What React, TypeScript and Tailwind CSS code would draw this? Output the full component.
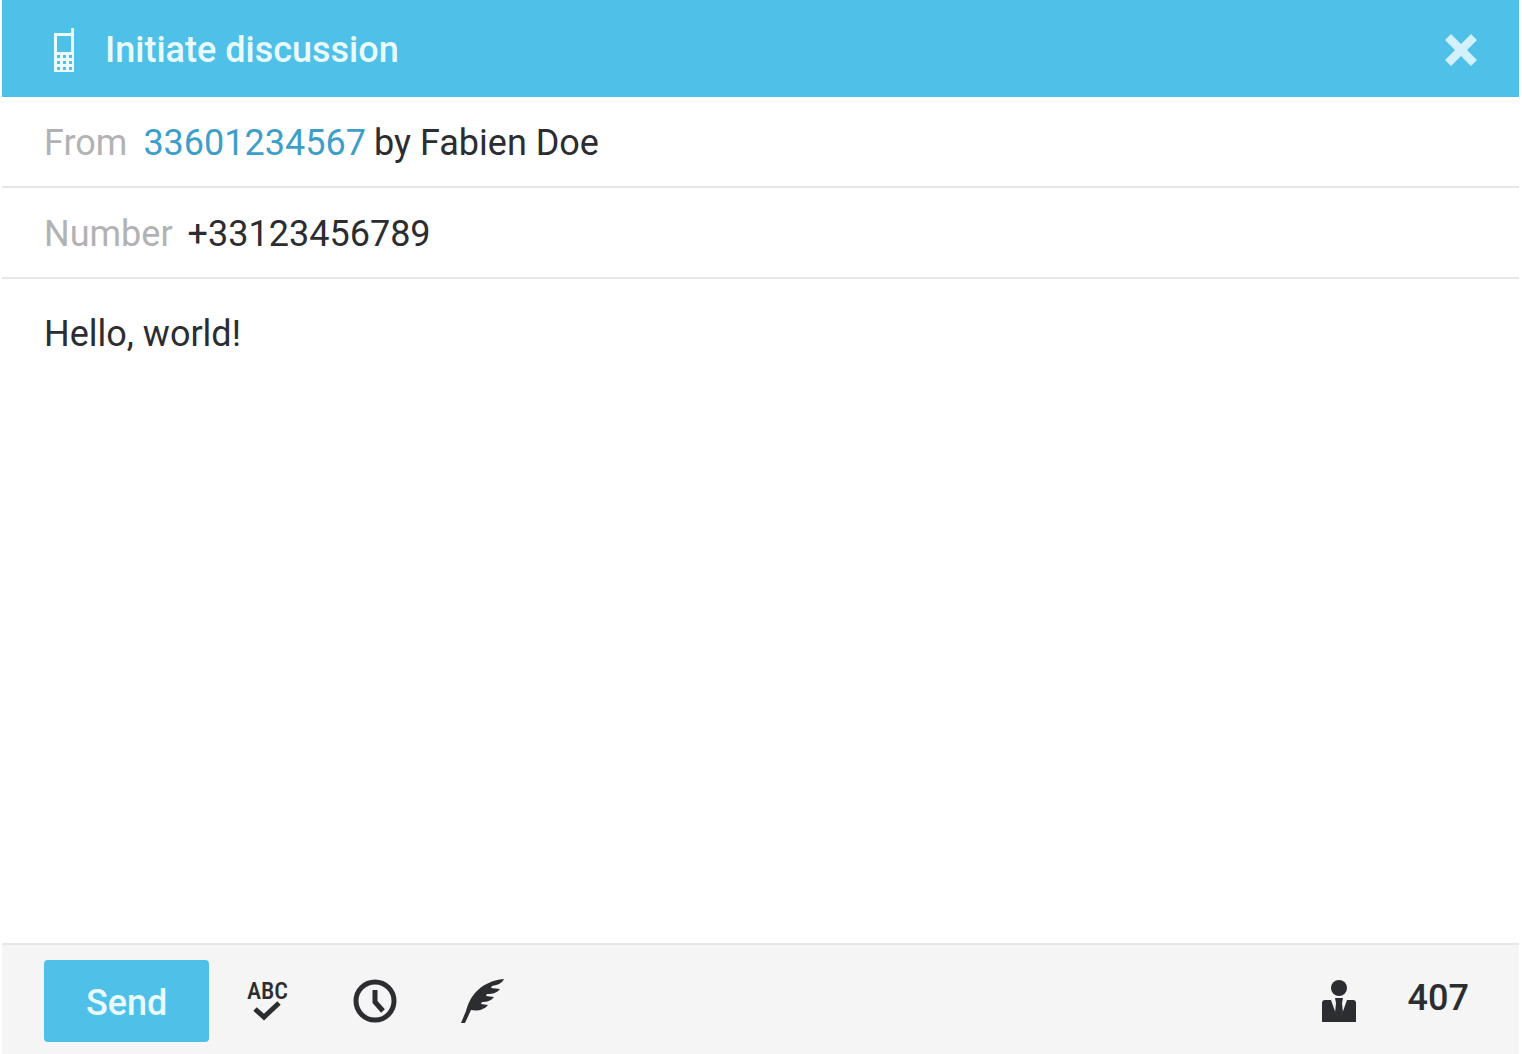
import { useState } from "react";

function PhoneIcon() {
  return (
    <svg viewBox="0 0 20 44" className="h-11 w-5" fill="currentColor" aria-hidden="true">
      <path
        fillRule="evenodd"
        d="M17 0h3v44H0V5h17zM3 8v16h14V8zM3 27v3h3v-3zM9 27v3h3v-3zM15 27v3h3v-3zM3 33v3h3v-3zM9 33v3h3v-3zM15 33v3h3v-3zM3 39v3h3v-3zM9 39v3h3v-3zM15 39v3h3v-3z"
      />
    </svg>
  );
}

function CloseIcon() {
  return (
    <svg viewBox="0 0 32 32" className="size-8" fill="currentColor" aria-hidden="true">
      <path d="M6 0l10 10L26 0l6 6-10 10 10 10-6 6-10-10L6 32l-6-6 10-10L0 6z" />
    </svg>
  );
}

function SpellCheckIcon() {
  return (
    <span className="flex flex-col items-center">
      <span className="font-['Roboto_Condensed','Liberation_Sans_Narrow',sans-serif] text-2xl leading-5 font-medium">
        ABC
      </span>
      <svg viewBox="0 0 28 20" className="h-5 w-7" aria-hidden="true">
        <path d="M2 8l9 8L26 2" fill="none" stroke="currentColor" strokeWidth="5" />
      </svg>
    </span>
  );
}

function ClockIcon() {
  return (
    <svg viewBox="0 0 44 44" className="size-11" fill="none" stroke="currentColor" aria-hidden="true">
      <circle cx="22" cy="22" r="19" strokeWidth="5" />
      <path d="M22 11v12l8 9" strokeWidth="5" />
    </svg>
  );
}

function FeatherIcon() {
  return (
    <svg viewBox="0 0 44 44" className="size-11" fill="currentColor" aria-hidden="true">
      <path d="M43 0C31 1 21 6 14 14C9 20 7 25 5 32L0 44h4l6-13c5 1 12 1 17-5l-7-1 1-2c5 0 9-1 12-5l-8-1 1-2c6 0 10-1 13-5l-9-1 1-2c6-1 10-3 12-7z" />
    </svg>
  );
}

function ContactIcon() {
  return (
    <svg viewBox="0 0 34 42" className="h-[42px] w-[34px]" fill="currentColor" aria-hidden="true">
      <circle cx="17" cy="8" r="8" />
      <path d="M0 23c0-2 1-3 3-3h6l5 14 3 3 3-3 5-14h6c2 0 3 1 3 3v19H0z" />
      <path d="M13 18h8l-1 5 1 10-4 5-4-5 1-10z" />
    </svg>
  );
}

const toolButton = "flex size-11 items-center justify-center";

export default function App() {
  const [sender, setSender] = useState("+33123456789");
  const [message, setMessage] = useState("Hello, world!");

  return (
    <main className="min-h-screen bg-white pr-[3px] pl-[2px] font-[Roboto,sans-serif] text-4xl leading-11 text-[#2b2d31]">
      <form className="flex min-h-screen flex-col" onSubmit={(e) => e.preventDefault()}>
        <header className="flex h-[97px] items-center bg-[#4fc0e8] pt-[3px] pr-[42px] pl-[52px] text-[#e9fbff]">
          <PhoneIcon />
          <h1 className="ml-[31px] grow font-medium">Initiate discussion</h1>
          <button type="button" aria-label="Close" className="flex items-center text-[#d3f1fc]">
            <CloseIcon />
          </button>
        </header>

        <div className="flex h-[91px] items-center border-b-2 border-[#e6e6e8] px-[42px] pt-[3px]">
          <span className="mr-4 text-[#b2b2b5]">From</span>
          <a href="#sender" className="mr-2 text-[#3d9fc9]">
            33601234567
          </a>
          <span>by Fabien Doe</span>
        </div>

        <div className="flex h-[91px] items-center border-b-2 border-[#e6e6e8] px-[42px] pt-[3px]">
          <label htmlFor="number" className="mr-[15px] text-[#b2b2b5]">
            Number
          </label>
          <input
            id="number"
            type="tel"
            value={sender}
            onChange={(e) => setSender(e.target.value)}
            className="min-w-0 grow bg-transparent outline-none"
          />
        </div>

        <textarea
          aria-label="Message"
          value={message}
          onChange={(e) => setMessage(e.target.value)}
          className="grow resize-none bg-transparent px-[42px] py-[33px] outline-none"
        />

        <footer className="flex h-[111px] items-center border-t-2 border-[#e6e6e8] bg-[#f5f5f5] px-[42px] pt-[2px]">
          <button
            type="submit"
            className="mr-9 h-[82px] rounded-sm bg-[#4fc0e8] px-[42px] pt-1 font-medium text-[#e9fbff]"
          >
            Send
          </button>
          <div className="flex grow items-center gap-16">
            <button type="button" aria-label="Check spelling" className={toolButton}>
              <SpellCheckIcon />
            </button>
            <button type="button" aria-label="Schedule" className={toolButton}>
              <ClockIcon />
            </button>
            <button type="button" aria-label="Insert signature" className={toolButton}>
              <FeatherIcon />
            </button>
          </div>
          <button type="button" aria-label="Insert contact" className="mr-[52px]">
            <ContactIcon />
          </button>
          <output aria-label="Characters left" className="mr-2 pb-1.5 font-medium">
            407
          </output>
        </footer>
      </form>
    </main>
  );
}
